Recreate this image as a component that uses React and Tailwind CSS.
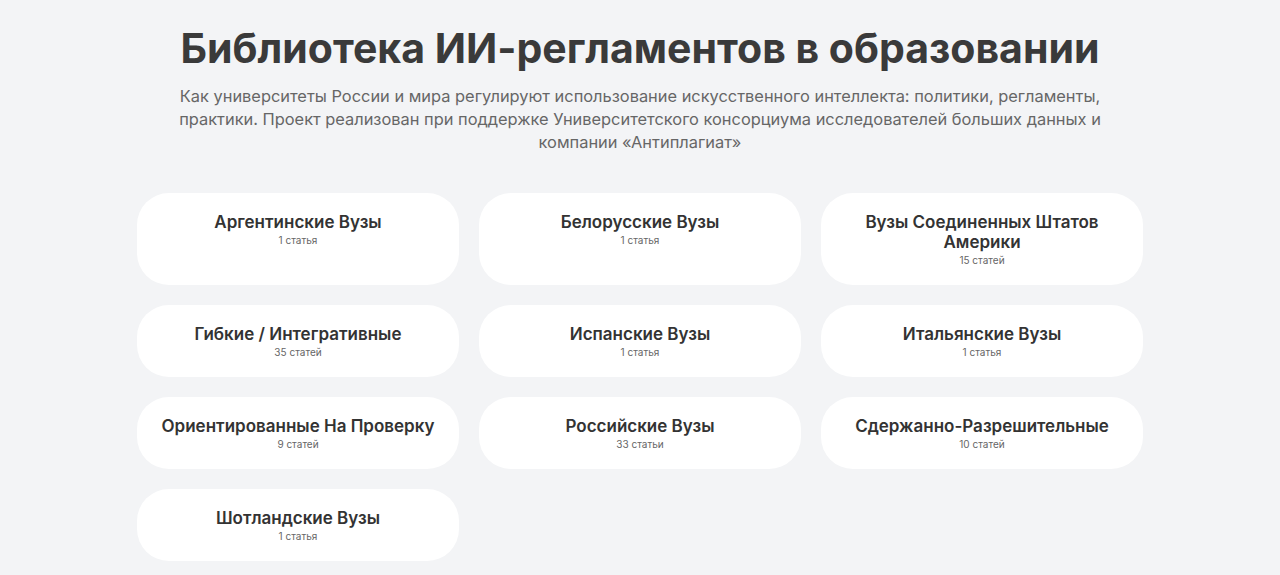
import React from 'react';

const groups = [
  { title: 'Аргентинские Вузы', count: '1 статья' },
  { title: 'Белорусские Вузы', count: '1 статья' },
  { title: 'Вузы Соединенных Штатов Америки', count: '15 статей' },
  { title: 'Гибкие / Интегративные', count: '35 статей' },
  { title: 'Испанские Вузы', count: '1 статья' },
  { title: 'Итальянские Вузы', count: '1 статья' },
  { title: 'Ориентированные На Проверку', count: '9 статей' },
  { title: 'Российские Вузы', count: '33 статьи' },
  { title: 'Сдержанно-Разрешительные', count: '10 статей' },
  { title: 'Шотландские Вузы', count: '1 статья' },
];

const GroupCard = ({ title, count }) => (
  <a
    href="#"
    className="flex flex-col items-center bg-white rounded-[32px] px-4 pt-[19px] pb-[18px] text-center hover:shadow-md transition-shadow"
  >
    <h3 className="text-[17px] leading-5 font-semibold text-[#333333]">{title}</h3>
    <p className="mt-px text-[10px] leading-[14px] text-[#666666]">{count}</p>
  </a>
);

const App = () => {
  return (
    <div className="min-h-screen bg-[#f3f4f6] font-['Inter','Noto_Sans',sans-serif] pb-10">
      <div className="mx-auto w-[1006px] pt-6">
        <h1 className="text-center text-[41px] leading-[48px] font-bold text-[#3a3a3a]">
          Библиотека ИИ-регламентов в образовании
        </h1>
        <p className="mx-auto mt-[13px] max-w-[960px] text-center text-[16.4px] leading-[23px] text-[#666666]">
          Как университеты России и мира регулируют использование искусственного интеллекта: политики, регламенты,
          практики. Проект реализован при поддержке Университетского консорциума исследователей больших данных и
          компании «Антиплагиат»
        </p>

        <div className="mt-[39px] grid grid-cols-3 gap-5">
          {groups.map((g) => (
            <GroupCard key={g.title} title={g.title} count={g.count} />
          ))}
        </div>
      </div>
    </div>
  );
};

export default App;
